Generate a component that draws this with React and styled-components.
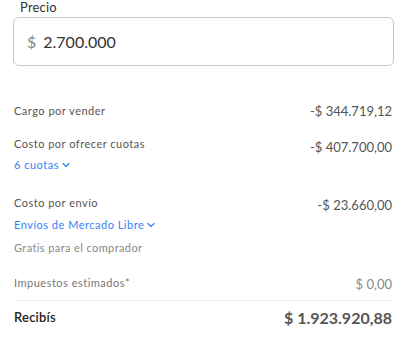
import styled, { createGlobalStyle } from 'styled-components'

const Global = createGlobalStyle`
body{
  margin:0;
  background:#fff;
  font-family: Lato, "Noto Sans", sans-serif;
}
`

const Page = styled.div`
padding: 0 21px 0 14px;
width: 413px;
box-sizing: border-box;
`

const Label = styled.div`
font-size: 13px;
line-height: 12px;
padding-top: 1px;
color: #333;
padding-left: 6px;
letter-spacing: 0.2px;
`

const Input = styled.div`
display: flex;
align-items: center;
gap: 7px;
height: 49px;
box-sizing: border-box;
margin: 4px -2px 0 -1px;
padding: 0 13px;
border: 1px solid #c8c8c8;
border-radius: 6px;
font-size: 16px;
color: #333;
span{color:#888;}
`

const Row = styled.div`
display: flex;
justify-content: space-between;
align-items: flex-start;
margin-top: ${p => p.$top}px;
`

const Left = styled.div`
display: flex;
flex-direction: column;
`

const Name = styled.div`
font-size: ${p => p.$strong ? 13 : 11}px;
line-height: 14px;
letter-spacing: ${p => p.$strong ? 0.2 : 0.5}px;
color: ${p => p.$color || (p.$strong ? '#222' : '#555')};
font-weight: ${p => p.$strong ? 600 : 400};
`

const Value = styled.div`
font-size: ${p => p.$strong ? 16 : 13}px;
line-height: 16px;
color: ${p => p.$color || '#555'};
font-weight: ${p => p.$strong ? 700 : 400};
margin-top: ${p => p.$off || 0}px;
`

const Link = styled.div`
display: flex;
align-items: center;
gap: 3px;
font-size: 11px;
line-height: 14px;
letter-spacing: 0.5px;
color: #3483fa;
margin-top: ${p => p.$top}px;
`

const Note = styled.div`
font-size: 11px;
line-height: 14px;
letter-spacing: 0.4px;
color: #888;
margin-top: ${p => p.$top}px;
`

const Divider = styled.hr`
border: none;
border-top: 1px solid #eee;
margin: 8px 0 0 1px;
`

const Chevron = () => (
  <svg width="8" height="6" viewBox="0 0 8 6" fill="none">
    <path d="M1 1.5 L4 4.5 L7 1.5" stroke="#3483fa" strokeWidth="1.2" strokeLinecap="round" strokeLinejoin="round" />
  </svg>
)

function App() {
  return (<>
    <Global />
    <Page>
      <Label>Precio</Label>
      <Input><span>$</span>2.700.000</Input>

      <Row $top={38}>
        <Name>Cargo por vender</Name>
        <Value $off={-1}>-$ 344.719,12</Value>
      </Row>

      <Row $top={18}>
        <Left>
          <Name>Costo por ofrecer cuotas</Name>
          <Link $top={7}>6 cuotas <Chevron /></Link>
        </Left>
        <Value $off={2}>-$ 407.700,00</Value>
      </Row>

      <Row $top={24}>
        <Left>
          <Name>Costo por envío</Name>
          <Link $top={8}>Envíos de Mercado Libre <Chevron /></Link>
          <Note $top={9}>Gratis para el comprador</Note>
        </Left>
        <Value $off={1}>-$ 23.660,00</Value>
      </Row>

      <Row $top={21}>
        <Name $color="#777">Impuestos estimados*</Name>
        <Value $color="#888">$ 0,00</Value>
      </Row>

      <Divider />

      <Row $top={9}>
        <Name $strong>Recibís</Name>
        <Value $strong>$ 1.923.920,88</Value>
      </Row>
    </Page>
  </>)
}

export default App
